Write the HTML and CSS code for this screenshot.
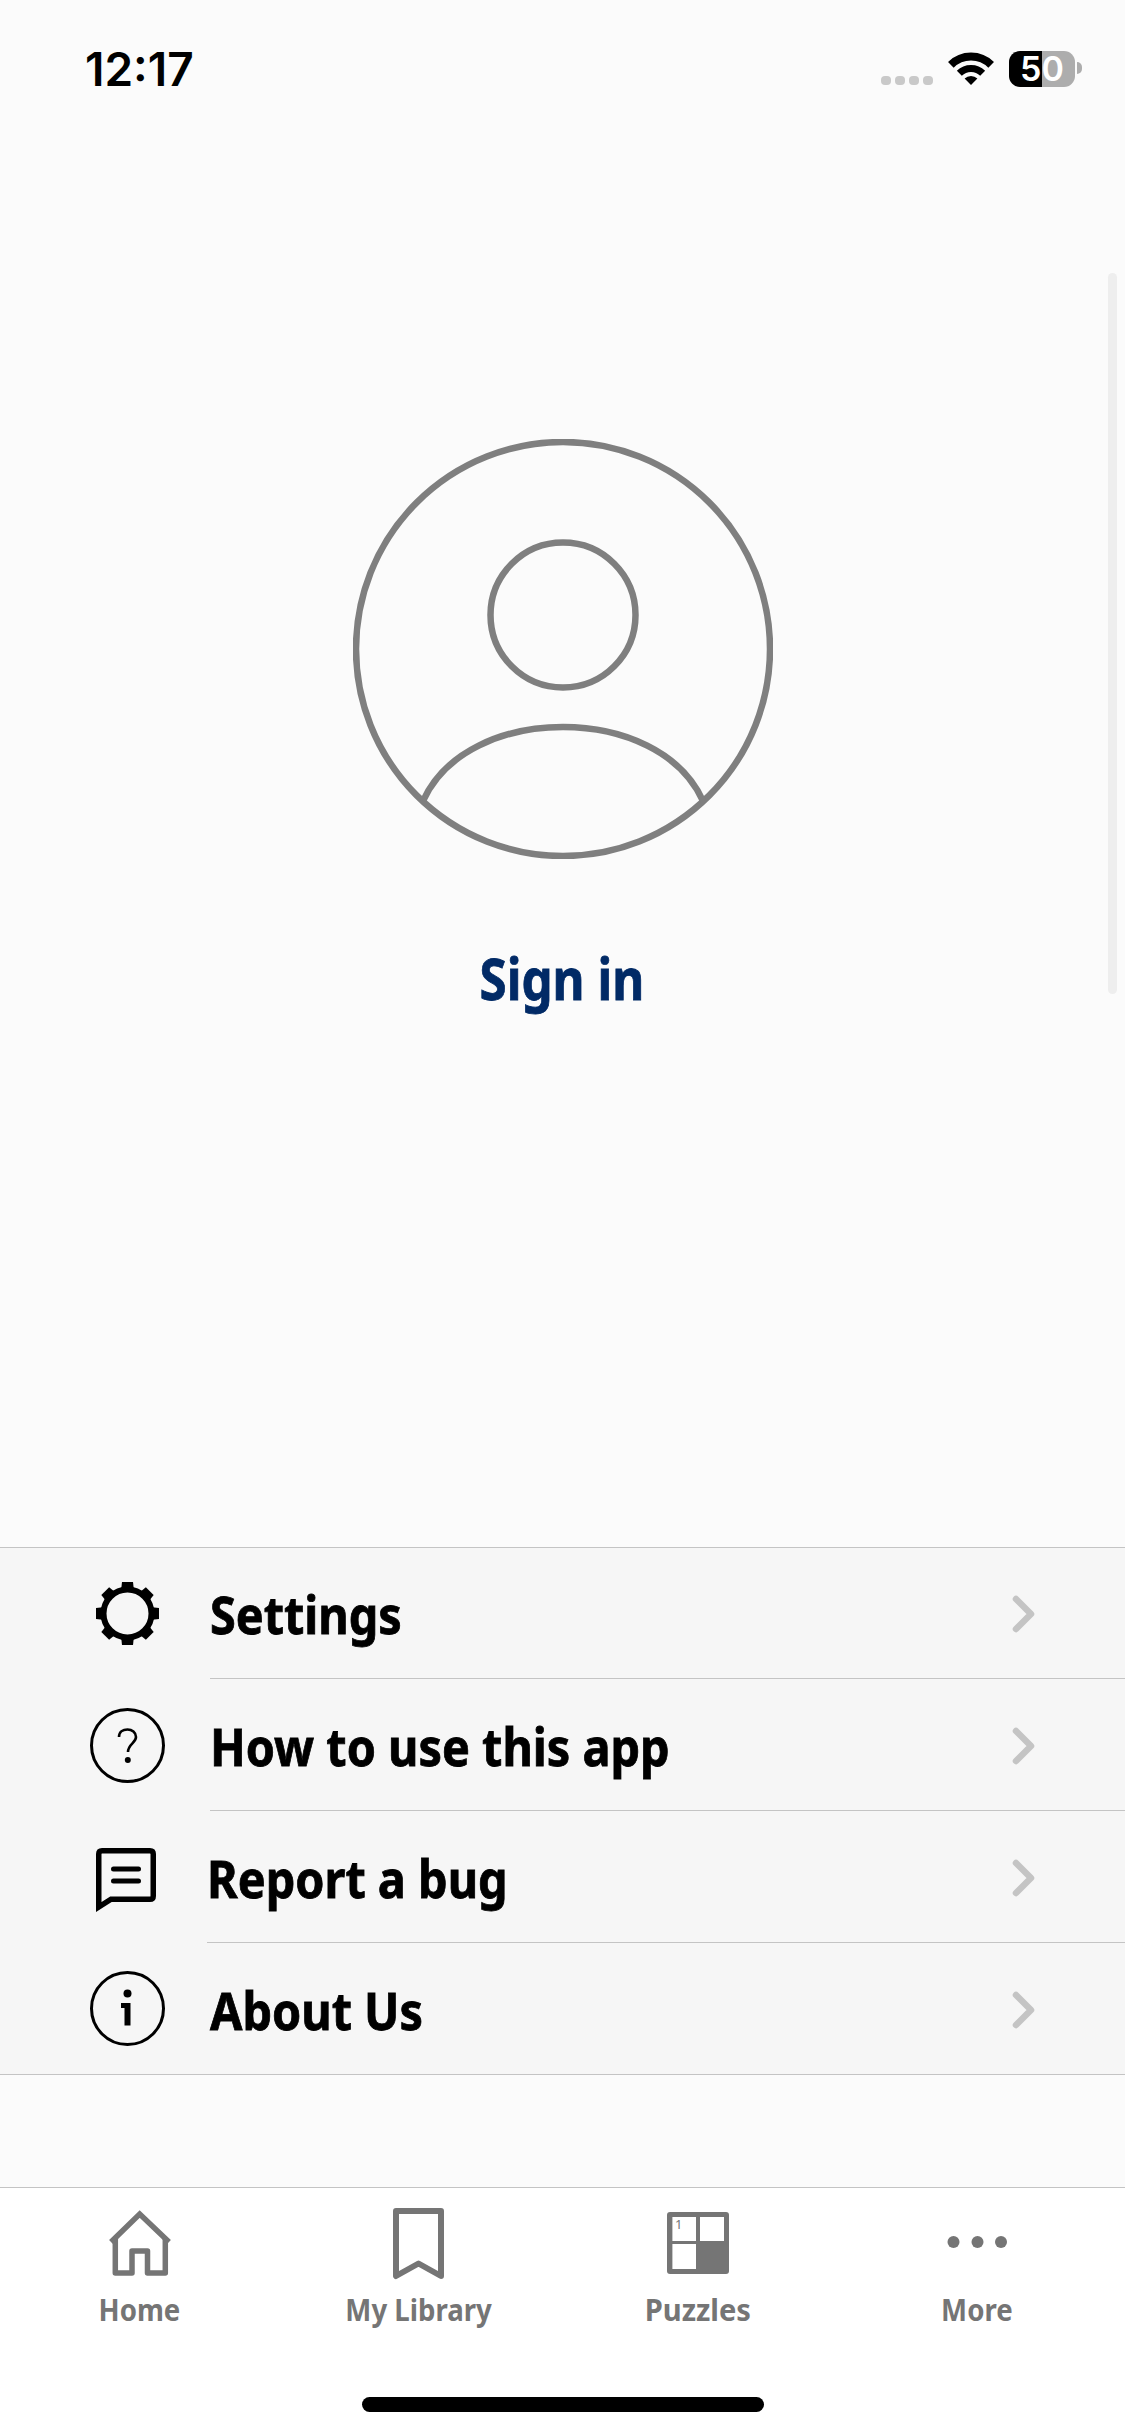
FILE: index.html
```html
<!DOCTYPE html>
<html lang="en">
<head>
<meta charset="utf-8">
<title>Profile</title>
<link rel="stylesheet" href="styles.css">
</head>
<body>
<div class="screen">
  <header class="status">
    <span class="time">12:17</span>
    <div class="status-right">
      <div class="signal"><i></i><i></i><i></i><i></i></div>
      <svg class="wifi" width="46" height="33" viewBox="0 0 46 33"><path d="M2.85 12.85A28.5 28.5 0 0 1 43.15 12.85" fill="none" stroke="#000" stroke-width="8"/><path d="M11.33 21.33A16.5 16.5 0 0 1 34.67 21.33" fill="none" stroke="#000" stroke-width="7"/><path d="M23 33L16.6 26.6A9 9 0 0 1 29.4 26.6Z" fill="#000"/></svg>
      <div class="battery"><span class="battery-level">50</span><span class="battery-tip"></span></div>
    </div>
  </header>

  <section class="profile">
    <svg class="avatar" width="420" height="420" viewBox="0 0 420 420" fill="none" stroke="#7f7f7f" stroke-width="6.5">
      <circle cx="210" cy="210" r="207"/>
      <circle cx="210" cy="176" r="72.500"/>
      <path d="M70 362C92 313 150 288 210 288S328 313 350 362"/>
    </svg>
    <a class="sign-in"><span>Sign in</span></a>
  </section>

  <nav class="list">
    <div class="row row-first">
      <svg class="row-icon" width="75" height="75" viewBox="0 0 75 75">
        <circle cx="37.5" cy="37.5" r="24" fill="none" stroke="#000" stroke-width="6"/>
        <g fill="#000">
          <path d="M31 15L32 6H43L44 15Z"/>
          <path transform="rotate(45 37.5 37.5)" d="M31 15L32 6H43L44 15Z"/>
          <path transform="rotate(90 37.5 37.5)" d="M31 15L32 6H43L44 15Z"/>
          <path transform="rotate(135 37.5 37.5)" d="M31 15L32 6H43L44 15Z"/>
          <path transform="rotate(180 37.5 37.5)" d="M31 15L32 6H43L44 15Z"/>
          <path transform="rotate(225 37.5 37.5)" d="M31 15L32 6H43L44 15Z"/>
          <path transform="rotate(270 37.5 37.5)" d="M31 15L32 6H43L44 15Z"/>
          <path transform="rotate(315 37.5 37.5)" d="M31 15L32 6H43L44 15Z"/>
        </g>
      </svg>
      <div class="row-body"><span class="row-label">Settings</span><svg class="chevron" width="24" height="40" viewBox="0 0 24 40"><path d="M5 5L20 20L5 35" fill="none" stroke="#c4c4c4" stroke-width="6.5" stroke-linecap="round" stroke-linejoin="round"/></svg></div>
    </div>
    <div class="row">
      <svg class="row-icon" width="75" height="75" viewBox="0 0 75 75">
        <circle cx="37.5" cy="37.5" r="36" fill="none" stroke="#000" stroke-width="3"/>
        <path d="M29 29C29 24 33 21.500 37.500 21.500C42 21.500 46 24.500 46 29C46 35 38 36 38 44" fill="none" stroke="#000" stroke-width="2.6"/>
        <circle cx="37.800" cy="52" r="3" fill="#000"/>
      </svg>
      <div class="row-body"><span class="row-label">How to use this app</span><svg class="chevron" width="24" height="40" viewBox="0 0 24 40"><path d="M5 5L20 20L5 35" fill="none" stroke="#c4c4c4" stroke-width="6.5" stroke-linecap="round" stroke-linejoin="round"/></svg></div>
    </div>
    <div class="row row-tight">
      <svg class="row-icon" width="75" height="75" viewBox="0 0 75 75">
        <path d="M8.750 67V14Q8.750 10.750 12 10.750H60Q63.250 10.750 63.250 14V56Q63.250 59.250 60 59.250H21L8.750 67Z" fill="none" stroke="#000" stroke-width="5.500"/>
        <path d="M23.500 29H48.500M23.500 41H48.500" fill="none" stroke="#000" stroke-width="5" stroke-linecap="round"/>
      </svg>
      <div class="row-body"><span class="row-label">Report a bug</span><svg class="chevron" width="24" height="40" viewBox="0 0 24 40"><path d="M5 5L20 20L5 35" fill="none" stroke="#c4c4c4" stroke-width="6.5" stroke-linecap="round" stroke-linejoin="round"/></svg></div>
    </div>
    <div class="row row-last">
      <svg class="row-icon" width="75" height="75" viewBox="0 0 75 75">
        <circle cx="37.5" cy="37.5" r="36" fill="none" stroke="#000" stroke-width="3"/>
        <circle cx="37.500" cy="22.500" r="4" fill="#000"/>
        <path d="M31 32H40.500V54.500H34.500V37H31Z" fill="#000"/>
      </svg>
      <div class="row-body"><span class="row-label">About Us</span><svg class="chevron" width="24" height="40" viewBox="0 0 24 40"><path d="M5 5L20 20L5 35" fill="none" stroke="#c4c4c4" stroke-width="6.5" stroke-linecap="round" stroke-linejoin="round"/></svg></div>
    </div>
  </nav>

  <footer class="tabbar">
    <div class="tabs">
      <div class="tab">
        <svg class="tab-icon" width="62" height="72" viewBox="0 0 62 72"><g transform="translate(0 3)" fill="none" stroke="#757575" stroke-width="5.500"><path d="M2 31L30.700 3L60 31"/><path d="M6.300 27V62H23V40H38.500V62H56.300V27" stroke-linejoin="round"/></g></svg>
        <span class="tab-label">Home</span>
      </div>
      <div class="tab">
        <svg class="tab-icon" width="51" height="72" viewBox="0 0 51 72"><path d="M3 3H48V68L25.500 55.500L3 68Z" fill="none" stroke="#757575" stroke-width="6" stroke-linejoin="round"/></svg>
        <span class="tab-label">My Library</span>
      </div>
      <div class="tab">
        <svg class="tab-icon" width="62" height="72" viewBox="0 0 62 72"><g transform="translate(0 4)"><rect width="62" height="62" rx="3" fill="#757575"/><path fill="#fff" d="M5.400 5H29V29H5.400ZM33 5H57V29H33ZM5.400 32H29V57H5.400Z"/></g><text x="8" y="21" class="cell-number">1</text></svg>
        <span class="tab-label tab-label-wide">Puzzles</span>
      </div>
      <div class="tab">
        <svg class="tab-icon" width="60" height="72" viewBox="0 0 60 72"><g fill="#757575"><circle cx="6.500" cy="34" r="6"/><circle cx="30.500" cy="34" r="6"/><circle cx="54" cy="34" r="6"/></g></svg>
        <span class="tab-label">More</span>
      </div>
    </div>
    <div class="home-indicator"></div>
  </footer>

  <div class="scrollbar"></div>
</div>
</body>
</html>
```
FILE: styles.css
```css
* { box-sizing: border-box; }
html, body { margin: 0; padding: 0; }
body { font-family: "Noto Sans", "Open Sans", sans-serif; background: #fbfbfb; }
.screen {
  position: relative;
  width: 1125px;
  height: 2436px;
  display: flex;
  flex-direction: column;
  overflow: hidden;
  background: #fbfbfb;
}
.status {
  height: 132px;
  flex: none;
  display: flex;
  justify-content: space-between;
  padding: 45px 50px 0 85px;
}
.time {
  font-family: Inter, sans-serif;
  font-weight: 600;
  font-size: 46px;
  line-height: 48px;
  color: #000;
}
.status-right { display: flex; align-items: flex-start; height: 40px; padding-top: 6px; }
.signal { display: flex; gap: 4px; margin: 25px 15px 0 0; }
.signal i { width: 10px; height: 9px; border-radius: 4px; background: #c9c9c9; display: block; }
.wifi { margin: 1px 15px 0 0; }
.battery { position: relative; width: 66px; height: 36px; }
.battery-level {
  display: block;
  width: 66px;
  height: 36px;
  border-radius: 11px;
  background: linear-gradient(90deg, #000 50%, #adadad 50%);
  color: #fff;
  font-family: Inter, sans-serif;
  font-weight: 600;
  font-size: 34px;
  line-height: 36px;
  text-align: center;
}
.battery-tip {
  position: absolute;
  left: 68px;
  top: 11px;
  width: 5px;
  height: 12px;
  border-radius: 0 6px 6px 0;
  background: #adadad;
}
.profile {
  flex: 1;
  display: flex;
  flex-direction: column;
  align-items: center;
  padding-top: 307px;
  margin-left: 1px;
}
.avatar { display: block; }
.sign-in {
  margin-top: 79px;
  font-weight: 700;
  font-size: 58px;
  line-height: 80px;
  color: #012a66;
  -webkit-text-stroke: .8px #012a66;
}
.sign-in span, .row-label, .tab-label {
  display: inline-block;
  white-space: nowrap;
}
.sign-in span { transform: translateX(-1px) scaleX(.85); }
.list {
  flex: none;
  background: #f6f6f6;
  border-top: 1px solid #c4c4c4;
  border-bottom: 1px solid #c4c4c4;
  margin-bottom: 112px;
}
.row { display: flex; height: 132px; padding-left: 90px; align-items: stretch; }
.row-first, .row-last { height: 131px; }
.row-icon { flex: none; align-self: center; margin-right: 45px; }
.row-tight .row-icon { margin-right: 42px; }
.row-body {
  flex: 1;
  display: flex;
  justify-content: space-between;
  align-items: center;
  padding: 2px 90px 0 0;
  border-bottom: 1px solid #c4c4c4;
}
.row-last .row-body { border-bottom: 0; }
.row-label {
  font-weight: 700;
  font-size: 52px;
  line-height: 70px;
  color: #000;
  -webkit-text-stroke: .8px #000;
  transform: scaleX(.9);
  transform-origin: left center;
}
.tabbar {
  flex: none;
  height: 249px;
  background: #fff;
  border-top: 1px solid #c4c4c4;
  display: flex;
  flex-direction: column;
  align-items: center;
}
.tabs {
  width: 1116px;
  margin-right: 9px;
  display: grid;
  grid-template-columns: repeat(4, 1fr);
  padding-top: 20px;
}
.tab { display: flex; flex-direction: column; align-items: center; }
.tab-icon { display: block; }
.tab-label {
  margin-top: 10px;
  font-weight: 700;
  font-size: 30px;
  line-height: 40px;
  color: #757575;
  transform: scaleX(.92);
}
.tab-label-wide { transform: scaleX(.97); }
.cell-number { font-family: "Noto Sans", sans-serif; font-size: 13px; fill: #757575; }
.home-indicator {
  width: 402px;
  height: 15px;
  border-radius: 8px;
  background: #000;
  margin-top: 67px;
}
.scrollbar {
  position: absolute;
  right: 8px;
  top: 273px;
  width: 9px;
  height: 721px;
  border-radius: 5px;
  background: #eeeeee;
}
```
